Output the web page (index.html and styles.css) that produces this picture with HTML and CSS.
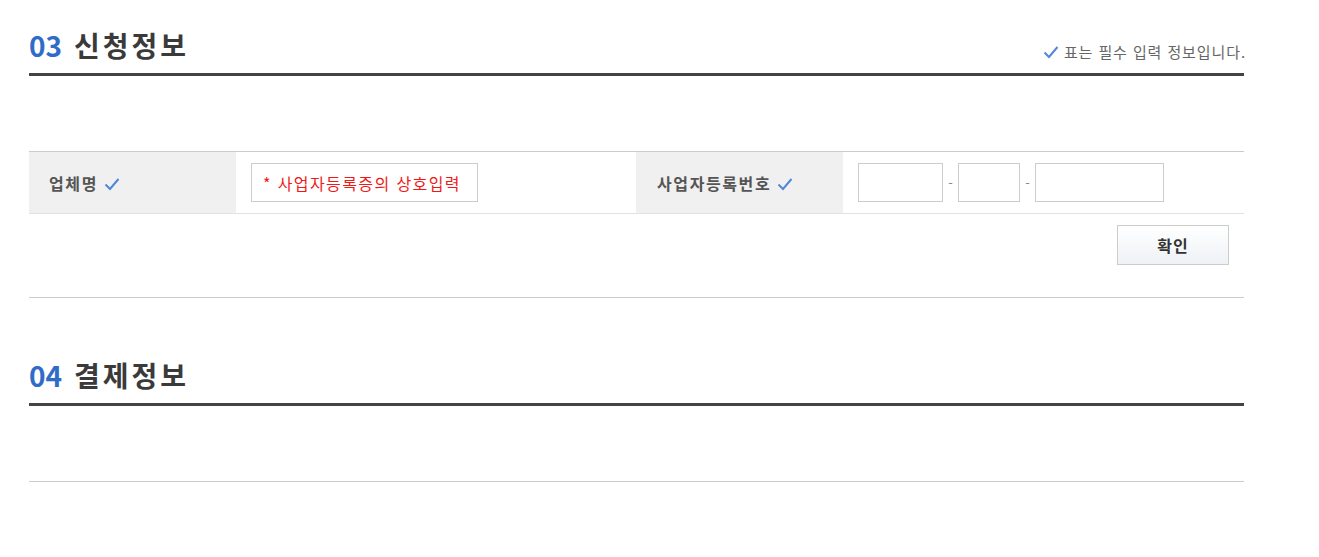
FILE: index.html
```html
<!DOCTYPE html>
<html lang="ko">
<head>
    <meta charset="UTF-8">
    <title>신청정보</title>
    <link rel="stylesheet" href="styles.css">
</head>
<body>
    <div id="wrap">
        <div class="sec-head">
            <h2><span class="num">03</span>신청정보</h2>
            <p class="note"><svg class="chk" viewBox="0 0 16 14" width="16" height="14"><path d="M1.5 7.5 L6 12 L14.5 2" fill="none" stroke="#5286d8" stroke-width="2"/></svg>표는 필수 입력 정보입니다.</p>
        </div>

        <div class="form-table">
            <div class="row">
                <div class="th">업체명<svg class="chk" viewBox="0 0 16 14" width="16" height="14"><path d="M1.5 7.5 L6 12 L14.5 2" fill="none" stroke="#5286d8" stroke-width="2"/></svg></div>
                <div class="td"><input type="text" class="ipt-name" placeholder="* 사업자등록증의 상호입력"></div>
                <div class="th">사업자등록번호<svg class="chk" viewBox="0 0 16 14" width="16" height="14"><path d="M1.5 7.5 L6 12 L14.5 2" fill="none" stroke="#5286d8" stroke-width="2"/></svg></div>
                <div class="td biz">
                    <input type="text" class="ipt-a">
                    <span class="dash">-</span>
                    <input type="text" class="ipt-b">
                    <span class="dash">-</span>
                    <input type="text" class="ipt-c">
                </div>
            </div>
            <div class="btn-row">
                <button type="button" class="btn">확인</button>
            </div>
        </div>

        <div class="sec-head sec2">
            <h2><span class="num">04</span>결제정보</h2>
        </div>
        <div class="form-table empty"></div>
    </div>
</body>
</html>
```

FILE: styles.css
```css
*{margin: 0;padding: 0;box-sizing: border-box;}
body{font-family: "Noto Sans CJK KR", "Noto Sans", sans-serif;color: #333;background: #fff;}
#wrap{width: 1215px;margin-left: 29px;}

.sec-head{display: flex;justify-content: space-between;align-items: flex-end;margin-top: 24px;border-bottom: 3px solid #444;height: 52px;}
.sec-head h2{font-size: 28px;font-weight: 700;line-height: 40px;color: #3a3a3a;padding-bottom: 8px;letter-spacing: 3px;}
.sec-head .num{color: #2f6cc8;margin-right: 12px;letter-spacing: 0;}
.sec2{margin-top: 56px;}

.note{display: flex;align-items: center;font-size: 15px;color: #666;padding-bottom: 11px;line-height: 20px;letter-spacing: 0.9px;margin-right: -2px;}
.note .chk{margin-right: 5px;}

.chk{display: inline-block;}

.form-table{margin-top: 75px;border-top: 1px solid #ccc;}
.form-table.empty{margin-top: 75px;border-top: 0;border-bottom: 1px solid #ccc;}

.row{display: grid;grid-template-columns: 207px 400px 207px 1fr;height: 62px;border-bottom: 1px solid #e2e2e2;}
.th{display: flex;align-items: center;background: #f0f0f0;padding-left: 20px;font-size: 16px;font-weight: 700;color: #555;letter-spacing: 1.6px;}
.row .th:nth-child(3){padding-left: 21px;}
.th .chk{margin-left: 6px;margin-top: 3px;}
.td{display: flex;align-items: center;padding-left: 15px;}

input{height: 39px;border: 1px solid #ccc;background: #fff;font-family: inherit;font-size: 16px;padding: 0 11px;outline: none;letter-spacing: 1.4px;}
input::placeholder{color: #f01818;}
.ipt-name{width: 227px;}
.ipt-a{width: 85px;}
.ipt-b{width: 62px;}
.ipt-c{width: 129px;}
.dash{width: 15px;text-align: center;font-size: 13px;color: #888;}

.btn-row{display: flex;justify-content: flex-end;height: 84px;padding: 11px 15px 0 0;border-bottom: 1px solid #ccc;}
.btn{width: 112px;height: 40px;border: 1px solid #ccc;background: linear-gradient(#fff, #eef2f6);font-family: inherit;font-size: 16px;font-weight: 700;color: #333;cursor: pointer;letter-spacing: 1px;}
```
